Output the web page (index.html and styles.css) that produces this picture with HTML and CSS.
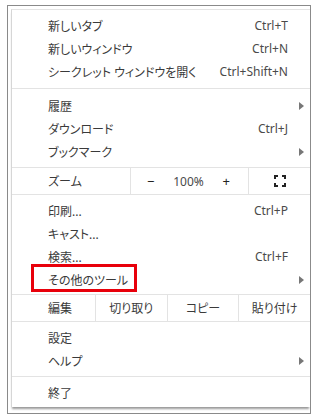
FILE: index.html
```html
<!doctype html>
<html lang="ja">
  <head>
    <meta charset="UTF-8" />
    <title>Chrome メニュー</title>
    <link rel="stylesheet" href="styles.css">
  </head>
  <body>
    <div class="frame">
      <div class="menu">
        <div class="item"><span class="label">新しいタブ</span><span class="key">Ctrl+T</span><span class="arrow"></span></div>
        <div class="item"><span class="label">新しいウィンドウ</span><span class="key">Ctrl+N</span><span class="arrow"></span></div>
        <div class="item"><span class="label">シークレット ウィンドウを開く</span><span class="key">Ctrl+Shift+N</span><span class="arrow"></span></div>

        <div class="sep"></div>

        <div class="item"><span class="label">履歴</span><span class="key"></span><span class="arrow"><i class="tri"></i></span></div>
        <div class="item"><span class="label">ダウンロード</span><span class="key">Ctrl+J</span><span class="arrow"></span></div>
        <div class="item"><span class="label">ブックマーク</span><span class="key"></span><span class="arrow"><i class="tri"></i></span></div>

        <!-- Zoom row -->
        <div class="zoom-row">
          <span class="cell label-cell">ズーム</span>
          <span class="cell zoom-ctrl">
            <span class="minus">−</span>
            <span class="pct">100%</span>
            <span class="plus">+</span>
          </span>
          <span class="cell full">
            <svg width="12" height="12" viewBox="0 0 12 12">
              <path d="M1 4V1h3M8 1h3v3M11 8v3H8M4 11H1V8" fill="none" stroke="#222" stroke-width="2" />
            </svg>
          </span>
        </div>

        <div class="item"><span class="label">印刷...</span><span class="key">Ctrl+P</span><span class="arrow"></span></div>
        <div class="item"><span class="label">キャスト...</span><span class="key"></span><span class="arrow"></span></div>
        <div class="item"><span class="label">検索...</span><span class="key">Ctrl+F</span><span class="arrow"></span></div>
        <div class="item marked">
          <span class="label">その他のツール</span><span class="key"></span><span class="arrow"><i class="tri"></i></span>
          <span class="highlight"></span>
        </div>

        <!-- Edit row -->
        <div class="edit-row">
          <span class="cell label-cell">編集</span>
          <span class="cell">切り取り</span>
          <span class="cell">コピー</span>
          <span class="cell">貼り付け</span>
        </div>

        <div class="item"><span class="label">設定</span><span class="key"></span><span class="arrow"></span></div>
        <div class="item"><span class="label">ヘルプ</span><span class="key"></span><span class="arrow"><i class="tri"></i></span></div>

        <div class="sep last"></div>

        <div class="item"><span class="label">終了</span><span class="key"></span><span class="arrow"></span></div>
      </div>
    </div>
  </body>
</html>
```

FILE: styles.css
```css
/* Chrome-style context menu on a framed screenshot */
body {
  margin: 0;
  background-color: #fff;
  font-family: "Noto Sans", "Noto Sans CJK JP", sans-serif;
  font-size: 12px;
  font-feature-settings: "palt";
  color: #3a3a3a;
}

.frame {
  margin: 5px 0 0 7px;
  width: 299px;
  height: 404px;
  border: 1px solid #8a8a8a;
  padding: 3px 0 0 3px;
}

.menu {
  background-color: #fff;
  border-left: 1px solid #d6d6d6;
  border-top: 1px solid #e4e4e4;
  padding: 4px 0 3px;
  box-shadow: 0 3px 2px -1px #9a9a9a;
}

.item {
  position: relative;
  display: grid;
  grid-template-columns: 1fr auto 22px;
  align-items: center;
  height: 23px;
  padding-left: 36px;
}

.key {
  color: #4a4a4a;
}

.arrow {
  display: flex;
  align-items: center;
  padding-left: 11px;
}

.tri {
  display: block;
  width: 0;
  height: 0;
  border-top: 4px solid transparent;
  border-bottom: 4px solid transparent;
  border-left: 5px solid #777;
}

.sep {
  height: 1px;
  background-color: #e3e3e3;
  margin: 5px 0;
}

.sep.last {
  margin: 4px 0;
}

.cell {
  display: flex;
  align-items: center;
  justify-content: center;
  border-left: 1px solid #e3e3e3;
}

.cell.label-cell {
  justify-content: flex-start;
  padding-left: 36px;
  border-left: none;
}

.zoom-row,
.edit-row {
  display: grid;
  height: 26px;
  border-top: 1px solid #e3e3e3;
  border-bottom: 1px solid #e3e3e3;
}

.zoom-row {
  grid-template-columns: 118px 118px 1fr;
  margin: 4px 0 4px;
}

.edit-row {
  grid-template-columns: 83px 1fr 1fr 1fr;
  margin: 3px 0 4px;
}

.zoom-ctrl {
  justify-content: space-between;
  padding: 0 18px 0 16px;
}

.zoom-ctrl .minus,
.zoom-ctrl .plus {
  font-size: 13px;
  color: #222;
}

.zoom-ctrl .pct {
  color: #4a4a4a;
}

.full svg {
  display: block;
}

/* Red annotation box drawn over the screenshot */
.highlight {
  position: absolute;
  left: 19px;
  top: -4px;
  width: 106px;
  height: 28px;
  border: 3px solid #e8000b;
  box-sizing: border-box;
}
```
